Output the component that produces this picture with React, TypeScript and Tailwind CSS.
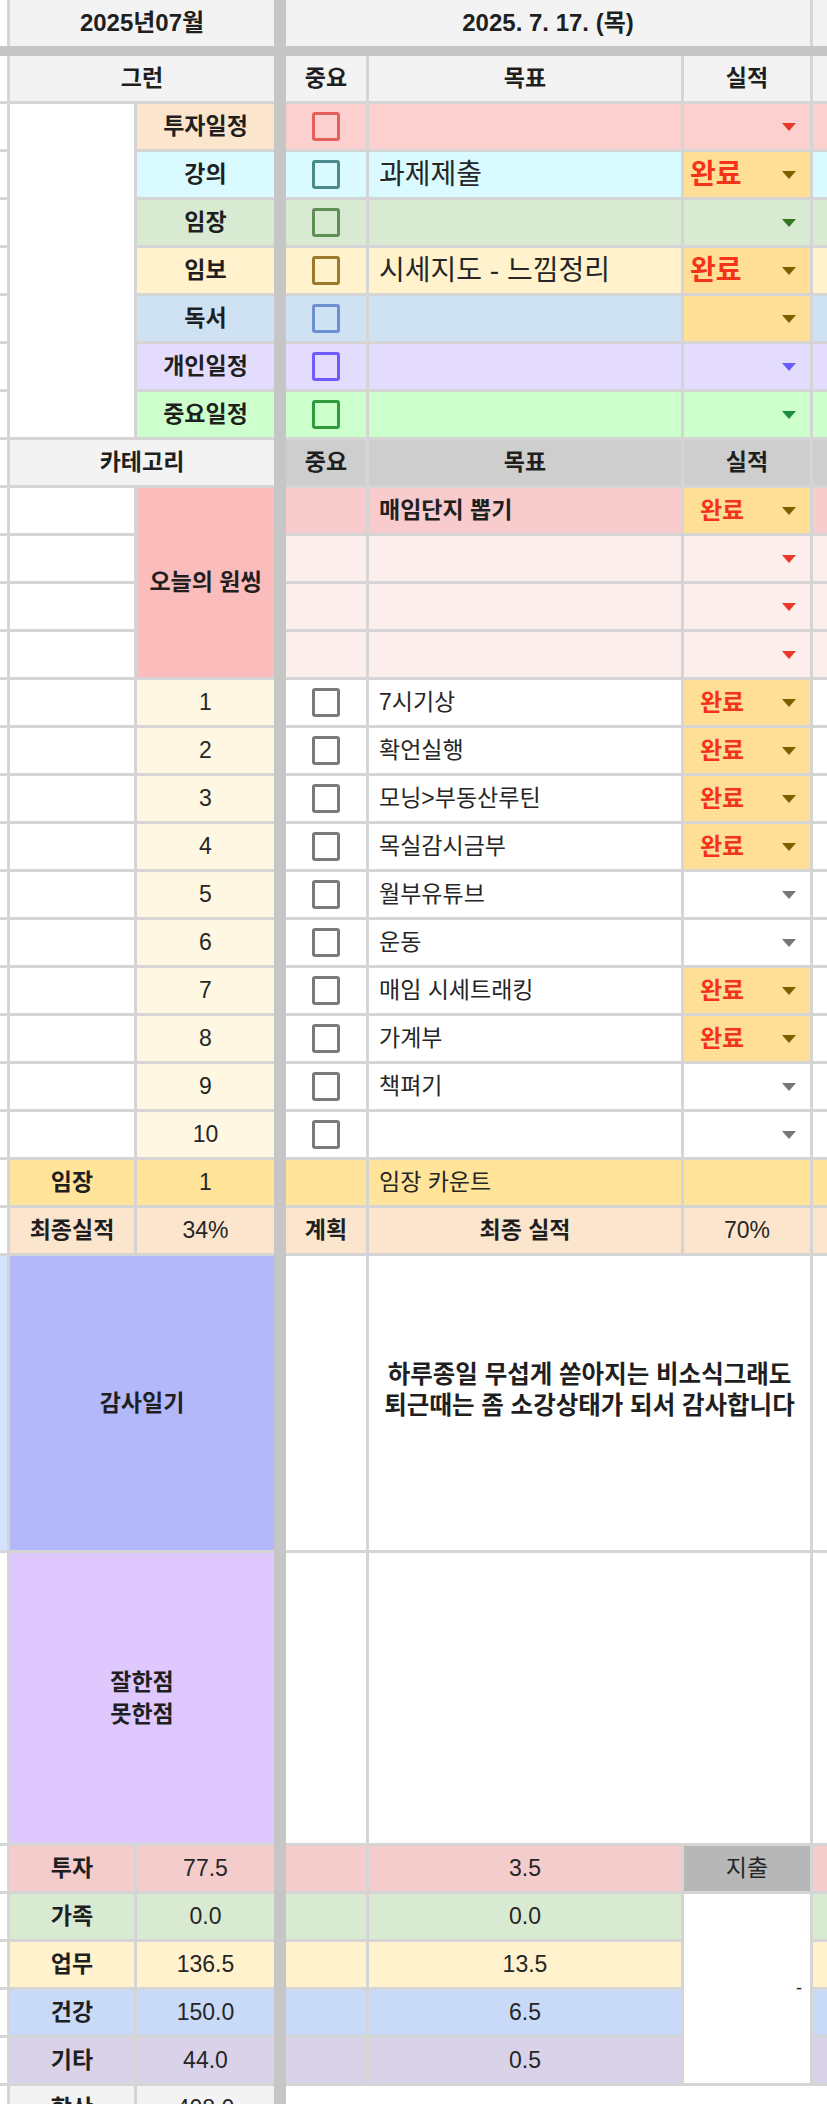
import React, { ReactNode } from "react";

interface CellProps {
  bg?: string;
  className?: string;
  children?: ReactNode;
}

const Cell = ({ bg = "bg-white", className = "", children }: CellProps) => (
  <div className={`${bg} flex items-center min-w-0 ${className}`}>{children}</div>
);

const Caret = ({ color }: { color: string }) => (
  <svg width="14" height="8" viewBox="0 0 14 8" className="shrink-0">
    <path d="M0 0H14L7 8Z" fill={color} />
  </svg>
);

const Check = ({ color }: { color: string }) => (
  <div className={`w-[28px] h-[29px] rounded-[3px] border-[3px] ${color}`} />
);

const Status = ({
  bg,
  done,
  big,
  caret,
}: {
  bg: string;
  done?: boolean;
  big?: boolean;
  caret: string;
}) => (
  <Cell
    bg={bg}
    className={`pr-[14px] ${done ? "justify-between" : "justify-end"} ${big ? "pl-[6px]" : "pl-[16px]"}`}
  >
    {done && (
      <span className={`font-bold text-[#f3341b] leading-none ${big ? "text-[28px]" : "text-[24px]"}`}>
        완료
      </span>
    )}
    <Caret color={caret} />
  </Cell>
);

const categories = [
  { label: "투자일정", labelBg: "bg-[#fce5cd]", bg: "bg-[#fdd0d0]", box: "border-[#e4605a]", caret: "#e8392b", goal: "", done: false, statusBg: "bg-[#fdd0d0]" },
  { label: "강의", labelBg: "bg-[#d9fbff]", bg: "bg-[#d9fbff]", box: "border-[#4b8a8a]", caret: "#7f6000", goal: "과제제출", done: true, statusBg: "bg-[#ffdf95]" },
  { label: "임장", labelBg: "bg-[#d9ead3]", bg: "bg-[#d9ead3]", box: "border-[#5f8f55]", caret: "#38761d", goal: "", done: false, statusBg: "bg-[#d9ead3]" },
  { label: "임보", labelBg: "bg-[#fff2cc]", bg: "bg-[#fff2cc]", box: "border-[#9c7a2c]", caret: "#7f6000", goal: "시세지도 - 느낌정리", done: true, statusBg: "bg-[#ffdf95]" },
  { label: "독서", labelBg: "bg-[#cfe2f3]", bg: "bg-[#cfe2f3]", box: "border-[#6e8fcf]", caret: "#7f6000", goal: "", done: false, statusBg: "bg-[#ffdf95]" },
  { label: "개인일정", labelBg: "bg-[#e3dcfd]", bg: "bg-[#e3dcfd]", box: "border-[#6f5cff]", caret: "#6b5cff", goal: "", done: false, statusBg: "bg-[#e3dcfd]" },
  { label: "중요일정", labelBg: "bg-[#ccffcc]", bg: "bg-[#ccffcc]", box: "border-[#2f9a3c]", caret: "#1e8e3e", goal: "", done: false, statusBg: "bg-[#ccffcc]" },
];

const routines = [
  { n: 1, goal: "7시기상", done: true },
  { n: 2, goal: "확언실행", done: true },
  { n: 3, goal: "모닝>부동산루틴", done: true },
  { n: 4, goal: "목실감시금부", done: true },
  { n: 5, goal: "월부유튜브", done: false },
  { n: 6, goal: "운동", done: false },
  { n: 7, goal: "매임 시세트래킹", done: true },
  { n: 8, goal: "가계부", done: true },
  { n: 9, goal: "책펴기", done: false },
  { n: 10, goal: "", done: false },
];

const totals = [
  { label: "투자", total: "77.5", today: "3.5", bg: "bg-[#f4cccc]" },
  { label: "가족", total: "0.0", today: "0.0", bg: "bg-[#d9ead3]" },
  { label: "업무", total: "136.5", today: "13.5", bg: "bg-[#fff2cc]" },
  { label: "건강", total: "150.0", today: "6.5", bg: "bg-[#c9daf8]" },
  { label: "기타", total: "44.0", today: "0.5", bg: "bg-[#d9d2e9]" },
];

const oneThing = [
  { goal: "매임단지 뽑기", done: true, bg: "bg-[#f8cccc]", statusBg: "bg-[#ffdf95]", caret: "#7f6000" },
  { goal: "", done: false, bg: "bg-[#fdeeee]", statusBg: "bg-[#fdeeee]", caret: "#e8392b" },
  { goal: "", done: false, bg: "bg-[#fdeeee]", statusBg: "bg-[#fdeeee]", caret: "#e8392b" },
  { goal: "", done: false, bg: "bg-[#fdeeee]", statusBg: "bg-[#fdeeee]", caret: "#e8392b" },
];

const head = "bg-[#f3f3f3]";
const label = "justify-center font-bold text-[23px] text-[#1f1f1f] leading-none";
const plain = "text-[23px] text-[#262626] leading-none";

export default function App() {
  return (
    <div className="w-[827px] h-[2104px] overflow-hidden bg-white font-['Liberation_Sans','Noto_Sans_CJK_KR',sans-serif]">
      <div className="grid w-[873px] gap-[3px] bg-[#d5d5d5] grid-cols-[7px_124px_137px_6px_80px_312px_126px_60px] grid-rows-[46px_4px_45px_repeat(7,45px)_45px_repeat(4,45px)_repeat(10,45px)_45px_45px_294px_290px_repeat(5,45px)_45px]">
        {/* frozen separators */}
        <div className="col-start-4 row-span-full -mx-[3px] bg-[#c6c6c6]" />
        <div className="col-span-full row-start-2 -my-[3px] bg-[#c6c6c6]" />

        {/* date header */}
        <Cell />
        <Cell bg={head} className={`col-span-2 ${label} text-[24px]`}>2025년07월</Cell>
        <Cell bg={head} className={`col-span-3 ${label} text-[24px]`}>2025. 7. 17. (목)</Cell>
        <Cell bg={head} />

        {/* schedule header */}
        <Cell />
        <Cell bg={head} className={`col-span-2 ${label}`}>그런</Cell>
        <Cell bg={head} className={label}>중요</Cell>
        <Cell bg={head} className={label}>목표</Cell>
        <Cell bg={head} className={label}>실적</Cell>
        <Cell bg={head} />

        {categories.map((c, i) => (
          <React.Fragment key={c.label}>
            <Cell />
            {i === 0 && <Cell className="row-span-7" />}
            <Cell bg={c.labelBg} className={label}>{c.label}</Cell>
            <Cell bg={c.bg} className="justify-center">
              <Check color={c.box} />
            </Cell>
            <Cell bg={c.bg} className="pl-[10px] text-[28px] text-[#262626] leading-none whitespace-nowrap">
              {c.goal}
            </Cell>
            <Status bg={c.statusBg} done={c.done} big caret={c.caret} />
            <Cell bg={c.bg} />
          </React.Fragment>
        ))}

        {/* category header */}
        <Cell />
        <Cell bg={head} className={`col-span-2 ${label}`}>카테고리</Cell>
        <Cell bg="bg-[#cecece]" className={label}>중요</Cell>
        <Cell bg="bg-[#cecece]" className={label}>목표</Cell>
        <Cell bg="bg-[#cecece]" className={label}>실적</Cell>
        <Cell bg="bg-[#cecece]" />

        {oneThing.map((o, i) => (
          <React.Fragment key={i}>
            <Cell />
            <Cell />
            {i === 0 && (
              <Cell bg="bg-[#fbbcbc]" className={`row-span-4 ${label}`}>
                오늘의 원씽
              </Cell>
            )}
            <Cell bg={o.bg} />
            <Cell bg={o.bg} className="pl-[10px] font-bold text-[23px] text-[#1f1f1f] leading-none">
              {o.goal}
            </Cell>
            <Status bg={o.statusBg} done={o.done} caret={o.caret} />
            <Cell bg={o.bg} />
          </React.Fragment>
        ))}

        {routines.map((r) => (
          <React.Fragment key={r.n}>
            <Cell />
            <Cell />
            <Cell bg="bg-[#fef8e3]" className={`justify-center ${plain}`}>{r.n}</Cell>
            <Cell className="justify-center">
              <Check color="border-[#7a7a7a]" />
            </Cell>
            <Cell className={`pl-[10px] ${plain}`}>{r.goal}</Cell>
            <Status
              bg={r.done ? "bg-[#ffdf95]" : "bg-white"}
              done={r.done}
              caret={r.done ? "#7f6000" : "#777777"}
            />
            <Cell />
          </React.Fragment>
        ))}

        {/* site visit count */}
        <Cell />
        <Cell bg="bg-[#ffe49a]" className={label}>임장</Cell>
        <Cell bg="bg-[#ffe49a]" className={`justify-center ${plain}`}>1</Cell>
        <Cell bg="bg-[#ffe49a]" />
        <Cell bg="bg-[#ffe49a]" className={`pl-[10px] ${plain}`}>임장 카운트</Cell>
        <Cell bg="bg-[#ffe49a]" />
        <Cell bg="bg-[#ffe49a]" />

        {/* final result */}
        <Cell />
        <Cell bg="bg-[#fce5cd]" className={label}>최종실적</Cell>
        <Cell bg="bg-[#fce5cd]" className={`justify-center ${plain}`}>34%</Cell>
        <Cell bg="bg-[#fce5cd]" className={label}>계획</Cell>
        <Cell bg="bg-[#fce5cd]" className={label}>최종 실적</Cell>
        <Cell bg="bg-[#fce5cd]" className={`justify-center ${plain}`}>70%</Cell>
        <Cell bg="bg-[#fce5cd]" />

        {/* gratitude */}
        <Cell bg="bg-[#d3e3fd]" />
        <Cell bg="bg-[#b3b8fa]" className={`col-span-2 ${label}`}>감사일기</Cell>
        <Cell />
        <Cell className="col-span-2 justify-center text-center font-bold text-[24.5px] leading-[31px] text-[#1f1f1f] pb-[26px] whitespace-nowrap">
          <p>
            하루종일 무섭게 쏟아지는 비소식그래도
            <br />
            퇴근때는 좀 소강상태가 되서 감사합니다
          </p>
        </Cell>
        <Cell />

        {/* review */}
        <Cell />
        <Cell
          bg="bg-[#dec8fd]"
          className="col-span-2 justify-center text-center font-bold text-[23px] leading-[32px] text-[#1f1f1f]"
        >
          <p>
            잘한점
            <br />
            못한점
          </p>
        </Cell>
        <Cell />
        <Cell className="col-span-2" />
        <Cell />

        {/* time totals */}
        {totals.map((t, i) => (
          <React.Fragment key={t.label}>
            <Cell />
            <Cell bg={t.bg} className={label}>{t.label}</Cell>
            <Cell bg={t.bg} className={`justify-center ${plain}`}>{t.total}</Cell>
            <Cell bg={t.bg} />
            <Cell bg={t.bg} className={`justify-center ${plain}`}>{t.today}</Cell>
            {i === 0 && (
              <Cell bg="bg-[#b7b7b7]" className={`justify-center ${plain}`}>지출</Cell>
            )}
            {i === 1 && (
              <Cell className="row-span-4 justify-end pr-[8px] text-[18px] text-[#222]">-</Cell>
            )}
            <Cell bg={t.bg} />
          </React.Fragment>
        ))}

        {/* sum */}
        <Cell />
        <Cell bg={head} className={label}>합산</Cell>
        <Cell bg={head} className={`justify-center ${plain}`}>408.0</Cell>
        <Cell className="col-span-4" />
      </div>
    </div>
  );
}
